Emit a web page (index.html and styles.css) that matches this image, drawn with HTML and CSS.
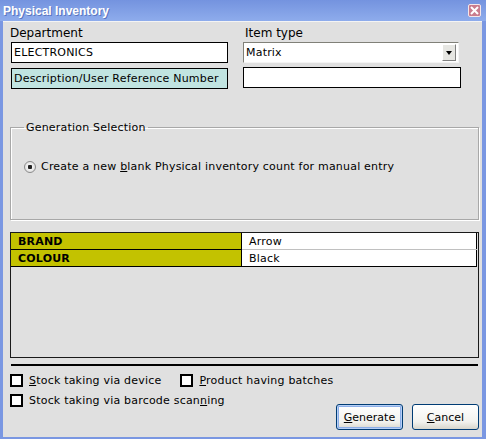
FILE: index.html
```html
<!DOCTYPE html>
<html lang="en">
  <head>
    <meta charset="UTF-8" />
    <title>Physical Inventory</title>
    <link rel="stylesheet" href="styles.css">
  </head>
  <body>
    <div class="window">
      <div class="titlebar">
        <span class="title">Physical Inventory</span>
        <span class="close-btn">
          <svg width="9" height="9" viewBox="0 0 9 9">
            <path d="M1 1 L8 8 M8 1 L1 8" stroke="#fff" stroke-width="2" />
          </svg>
        </span>
      </div>
      <div class="frame">
        <div class="top-grid">
          <div class="col">
            <div class="field-label">Department</div>
            <div class="text-box">ELECTRONICS</div>
            <div class="text-box ref-box">Description/User Reference Number</div>
          </div>
          <div class="col">
            <div class="field-label indent">Item type</div>
            <div class="combo">
              <span>Matrix</span>
              <span class="combo-btn"></span>
            </div>
            <div class="text-box wide-box"></div>
          </div>
        </div>

        <fieldset class="group">
          <legend>Generation Selection</legend>
          <div class="radio-row">
            <span class="radio"></span>
            <span>Create a new <u>b</u>lank Physical inventory count for manual entry</span>
          </div>
        </fieldset>

        <div class="attr-box">
          <table class="attr-table">
            <tr>
              <td class="attr-name">BRAND</td>
              <td class="attr-value">Arrow</td>
            </tr>
            <tr>
              <td class="attr-name">COLOUR</td>
              <td class="attr-value">Black</td>
            </tr>
          </table>
        </div>

        <div class="separator"></div>

        <div class="footer">
          <div class="options">
            <div class="option-row">
              <label class="check"><span class="box"></span><span><u>S</u>tock taking via device</span></label>
              <label class="check"><span class="box"></span><span><u>P</u>roduct having batches</span></label>
            </div>
            <div class="option-row">
              <label class="check"><span class="box"></span><span>Stock taking via barcode scan<u>n</u>ing</span></label>
            </div>
          </div>
          <div class="buttons">
            <button class="button default"><u>G</u>enerate</button>
            <button class="button"><u>C</u>ancel</button>
          </div>
        </div>
      </div>
    </div>
  </body>
</html>
```

FILE: styles.css
```css
body {
  margin: 0;
  padding: 0;
  font-family: "DejaVu Sans", Verdana, sans-serif;
  font-size: 11px;
  letter-spacing: 0.2px;
  color: #000;
}
.window {
  width: 486px;
  height: 439px;
  display: flex;
  flex-direction: column;
  background: #7a97e2;
}
.titlebar {
  height: 21px;
  flex: none;
  display: flex;
  align-items: center;
  justify-content: space-between;
  padding: 0 5px 0 3px;
  background: linear-gradient(#7493df, #8eacec);
  box-sizing: border-box;
}
.title {
  font-family: "Liberation Sans", Arial, sans-serif;
  font-weight: bold;
  font-size: 12px;
  letter-spacing: 0;
  color: #fff;
  text-shadow: 1px 1px 0 #5a76c0;
}
.close-btn {
  width: 13px;
  height: 13px;
  box-sizing: border-box;
  border: 1px solid #f4e6ea;
  background: #c97c8e;
  display: flex;
  align-items: center;
  justify-content: center;
  border-radius: 2px;
}
.close-btn svg {
  display: block;
}
.frame {
  flex: 1;
  margin: 0 4px 2px 3px;
  padding: 4px 3px 0 7px;
  background: #e0e0e0;
  border-top: 1px solid #f4f4f4;
  box-sizing: border-box;
}
.top-grid {
  display: grid;
  grid-template-columns: 233px 1fr;
}
.col {
  display: flex;
  flex-direction: column;
}
.field-label {
  font-size: 12px;
  letter-spacing: 0;
  line-height: 15px;
  height: 15px;
  margin-bottom: 1px;
}
.field-label.indent {
  padding-left: 2px;
}
.text-box {
  width: 217px;
  height: 21px;
  margin-left: 1px;
  box-sizing: border-box;
  border: 1px solid #000;
  background: #fff;
  padding: 0 2px;
  line-height: 19px;
  white-space: nowrap;
}
.ref-box {
  margin-top: 5px;
  background: #c1e4e1;
}
.wide-box {
  width: 218px;
  margin-left: 0;
  margin-top: 4px;
}
.combo {
  width: 216px;
  height: 21px;
  box-sizing: border-box;
  border: 1px solid;
  border-color: #808078 #f4f4f4 #f4f4f4 #808078;
  background: #fff;
  display: flex;
  align-items: center;
  justify-content: space-between;
  padding: 0 2px 0 2px;
}
.combo-btn {
  width: 14px;
  height: 17px;
  box-sizing: border-box;
  border: 1px solid;
  border-color: #fff #808080 #808080 #fff;
  background: #e6e6e2;
  position: relative;
}
.combo-btn::after {
  content: "";
  position: absolute;
  left: 3px;
  top: 6px;
  border-left: 3px solid transparent;
  border-right: 3px solid transparent;
  border-top: 4px solid #000;
}
.group {
  margin: 32px 0 0 0;
  padding: 26px 5px 46px 13px;
  border: 1px solid #a8a8a8;
  box-shadow: inset 1px 1px 0 #fff, 1px 1px 0 #fff;
}
.group legend {
  padding: 0 2px;
  margin-left: 0;
  line-height: 13px;
}
.radio-row {
  display: flex;
  align-items: center;
  gap: 5px;
  height: 13px;
}
.radio {
  width: 12px;
  height: 12px;
  box-sizing: border-box;
  border-radius: 50%;
  border: 1px solid #8c8c8c;
  background: radial-gradient(circle, #222 0, #222 2px, #f2f2f2 2.5px, #d4d4d4 100%);
}
.attr-box {
  margin-top: 12px;
  height: 126px;
  box-sizing: border-box;
  border: 1px solid #1a1a1a;
}
.attr-table {
  width: 466px;
  border-collapse: collapse;
  border-right: 1px solid #000;
}
.attr-table td {
  height: 16px;
  padding: 0;
  line-height: 15px;
}
.attr-name {
  width: 223px;
  background: #c3c200;
  font-weight: bold;
  padding-left: 7px !important;
  border-right: 1px solid #000;
  border-bottom: 1px solid #000;
}
.attr-value {
  background: #fff;
  padding-left: 7px !important;
  border-bottom: 1px solid #c0c0c0;
}
.attr-table tr:last-child td {
  border-bottom: 1px solid #000;
}
.separator {
  margin: 6px 1px 0 1px;
  height: 2px;
  background: #000;
}
.footer {
  display: flex;
  justify-content: space-between;
  margin-top: 8px;
}
.option-row {
  display: flex;
  gap: 19px;
  height: 13px;
  margin-bottom: 7px;
}
.check {
  display: flex;
  align-items: center;
  gap: 6px;
  white-space: nowrap;
}
.box {
  width: 13px;
  height: 13px;
  box-sizing: border-box;
  border: 2px solid #000;
  background: #fff;
}
.buttons {
  display: flex;
  gap: 9px;
  margin-top: 30px;
}
.button {
  width: 67px;
  height: 26px;
  padding: 0;
  font-family: "DejaVu Sans", Verdana, sans-serif;
  font-size: 11px;
  color: #000;
  border: 1px solid #003c74;
  border-radius: 3px;
  background: linear-gradient(#ffffff, #f2f2ee 70%, #d8d6cc);
}
.button.default {
  box-shadow: inset 0 0 0 1px #b6cff5, inset 0 0 0 2px #8caee8;
}
```
